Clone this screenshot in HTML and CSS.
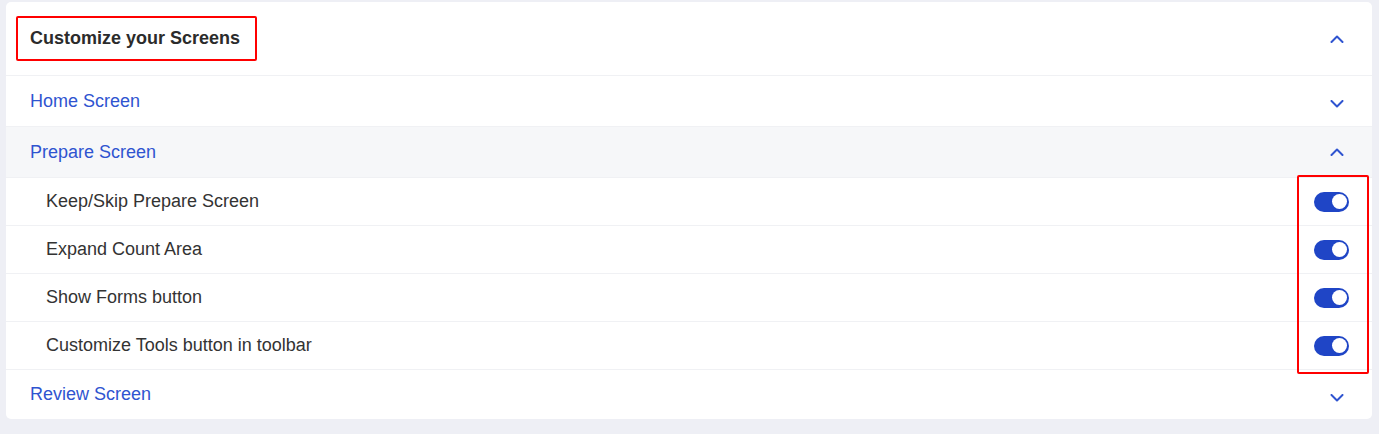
FILE: index.html
```html
<!DOCTYPE html>
<html>
<head>
<meta charset="utf-8">
<link rel="stylesheet" href="styles.css">
</head>
<body>
<div class="card">
  <div class="header">
    <span class="title">Customize your Screens</span>
    <svg class="chev" viewBox="0 0 14 8" width="14" height="8"><path d="M1.5 7 L7 1.5 L12.5 7" /></svg>
  </div>
  <div class="section">
    <span class="link">Home Screen</span>
    <svg class="chev down" viewBox="0 0 14 8" width="14" height="8"><path d="M1.5 1 L7 6.5 L12.5 1" /></svg>
  </div>
  <div class="section open">
    <span class="link">Prepare Screen</span>
    <svg class="chev" viewBox="0 0 14 8" width="14" height="8"><path d="M1.5 7 L7 1.5 L12.5 7" /></svg>
  </div>
  <div class="item"><span>Keep/Skip Prepare Screen</span><span class="toggle"><span class="knob"></span></span></div>
  <div class="item"><span>Expand Count Area</span><span class="toggle"><span class="knob"></span></span></div>
  <div class="item"><span>Show Forms button</span><span class="toggle"><span class="knob"></span></span></div>
  <div class="item"><span>Customize Tools button in toolbar</span><span class="toggle"><span class="knob"></span></span></div>
  <div class="section last">
    <span class="link">Review Screen</span>
    <svg class="chev down" viewBox="0 0 14 8" width="14" height="8"><path d="M1.5 1 L7 6.5 L12.5 1" /></svg>
  </div>
  <div class="highlight"></div>
</div>
</body>
</html>
```
FILE: styles.css
```css
html, body {
  margin: 0;
  padding: 0;
  background: #eeeff5;
}
body {
  padding: 2px 7px 0 6px;
  font-family: "Liberation Sans", Arial, sans-serif;
  font-size: 18px;
  color: #333;
}
.card {
  position: relative;
  background: #fff;
  border-radius: 5px;
  width: 1366px;
  overflow: hidden;
}
.header {
  display: flex;
  align-items: center;
  justify-content: space-between;
  padding: 14px 28px 14px 10px;
  border-bottom: 1px solid #f0f1f4;
}
.title {
  display: inline-block;
  border: 2px solid #f00;
  border-radius: 2px;
  padding: 10px 15px 10px 12px;
  font-weight: bold;
  line-height: 21px;
  color: #2b2b2b;
}
.chev {
  display: block;
  fill: none;
  stroke: #2f54d0;
  stroke-width: 2;
  stroke-linecap: round;
  stroke-linejoin: round;
}
.chev.down { margin-top: 6px; }
.section {
  display: flex;
  align-items: center;
  justify-content: space-between;
  height: 50px;
  padding: 0 28px 0 24px;
  border-bottom: 1px solid #f0f1f4;
}
.section.open {
  background: #f6f7f9;
}
.section.last {
  height: 49px;
  border-bottom: none;
}
.link {
  color: #2f54d0;
  line-height: 21px;
}
.item {
  display: flex;
  align-items: center;
  justify-content: space-between;
  height: 47px;
  padding: 0 23px 0 40px;
  border-bottom: 1px solid #f0f1f4;
}
.toggle {
  display: flex;
  align-items: center;
  justify-content: flex-end;
  width: 35px;
  height: 20px;
  border-radius: 10px;
  background: #1f45c6;
  padding: 0 2px;
  box-sizing: border-box;
}
.knob {
  width: 15px;
  height: 15px;
  border-radius: 50%;
  background: #fff;
}
.highlight {
  position: absolute;
  left: 1291px;
  top: 173px;
  width: 68px;
  height: 195px;
  border: 2px solid #f00;
  border-radius: 2px;
}
```
